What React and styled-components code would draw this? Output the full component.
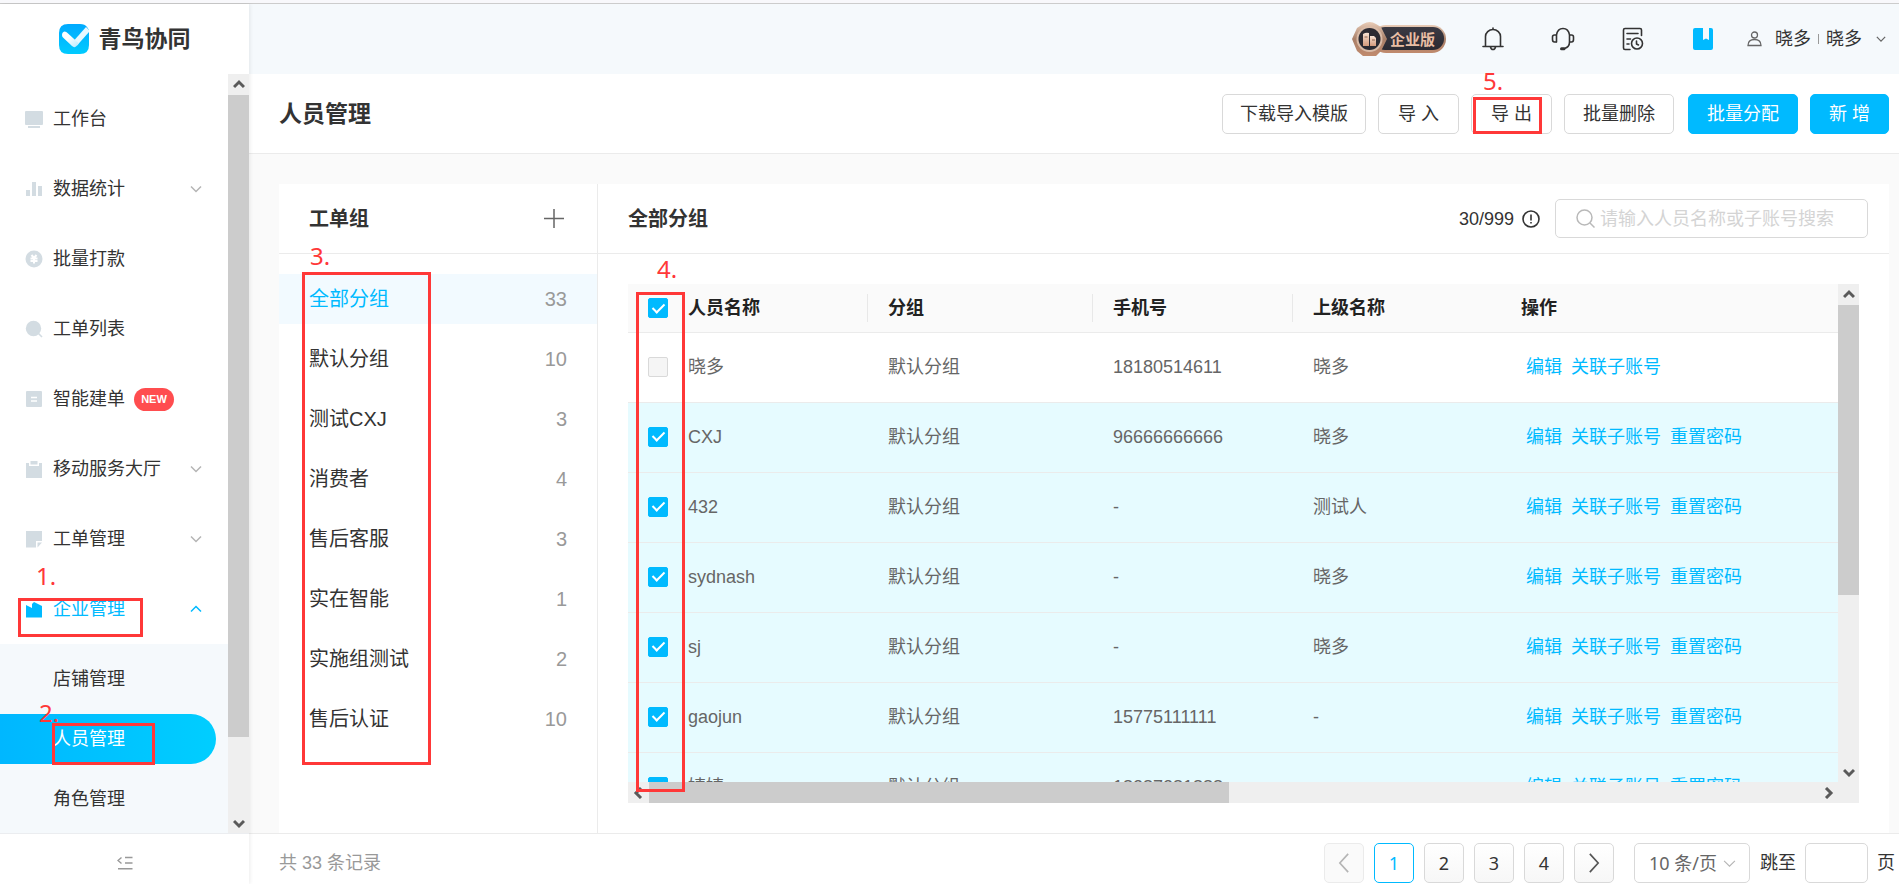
import React, { useState } from 'react'
import styled, { createGlobalStyle, css } from 'styled-components'

const GlobalStyle = createGlobalStyle`
  *, *::before, *::after {
    box-sizing: border-box;
  }
  body {
    margin: 0;
    color: #333;
    background: #fafafa;
    font-family: "Liberation Sans", "Noto Sans CJK SC", sans-serif;
    font-size: 18px;
    line-height: 28px;
  }
  button, input, select {
    font: inherit;
    color: inherit;
  }
  a {
    color: inherit;
    text-decoration: none;
  }
  ul {
    margin: 0;
    padding: 0;
    list-style: none;
  }
  svg {
    display: block;
    flex: none;
  }
`

const Page = styled.div`
  display: flex;
  flex-direction: column;
  height: 100vh;
  overflow: hidden;
  border-top: 3px solid #f8f8fb;
`

const Shell = styled.div`
  flex: 1;
  min-height: 0;
  display: flex;
  border-top: 1px solid #ccc;
`

/* ---------- annotations ---------- */

const MarkBox = styled.div`
  position: absolute;
  z-index: 3;
  top: ${p => p.$top}px;
  left: ${p => p.$left}px;
  width: ${p => p.$width}px;
  height: ${p => p.$height}px;
  border: 3px solid #ff3838;
  pointer-events: none;
`

const MarkLabel = styled.span`
  position: absolute;
  z-index: 3;
  top: ${p => p.$top}px;
  left: ${p => p.$left}px;
  color: #ff3838;
  font: 24px/28px "Noto Sans", sans-serif;
  pointer-events: none;
`

/* ---------- scrollbars ---------- */

const Track = styled.div`
  display: flex;
  flex-direction: ${p => (p.$horizontal ? 'row' : 'column')};
  ${p => (p.$horizontal ? 'height' : 'width')}: 21px;
  flex: none;
  background: #efefef;
`

const TrackArrow = styled.span`
  width: 21px;
  height: 21px;
  display: grid;
  place-items: center;
`

const TrackBody = styled.div`
  flex: 1;
  display: flex;
  flex-direction: inherit;
`

const Thumb = styled.div`
  flex: 0 0 ${p => p.$size};
  background: #ccc;
`

const VerticalBar = styled.div`
  display: flex;
  padding-bottom: 21px;
  background: #efefef;
`

const arrows = {
  up: 'M1 8 L6 3 L11 8',
  down: 'M1 4 L6 9 L11 4',
  left: 'M8 1 L3 6 L8 11',
  right: 'M4 1 L9 6 L4 11'
}

const Arrow = ({ dir }) => (
  <TrackArrow>
    <svg width="12" height="12" viewBox="0 0 12 12" fill="none" stroke="#5a5a5a" strokeWidth="3">
      <path d={arrows[dir]} />
    </svg>
  </TrackArrow>
)

const Scrollbar = ({ horizontal, size }) => (
  <Track $horizontal={horizontal} aria-hidden="true">
    <Arrow dir={horizontal ? 'left' : 'up'} />
    <TrackBody>
      <Thumb $size={size} />
    </TrackBody>
    <Arrow dir={horizontal ? 'right' : 'down'} />
  </Track>
)

/* ---------- sidebar ---------- */

const Sidebar = styled.aside`
  position: relative;
  z-index: 2;
  flex: 0 0 249px;
  display: flex;
  flex-direction: column;
  background: #fff;
  box-shadow: 1px 0 4px rgba(0, 0, 0, .08);
`

const Brand = styled.div`
  height: 70px;
  flex: none;
  display: flex;
  align-items: center;
  justify-content: center;
  gap: 10px;
  font-size: 23px;
  font-weight: 700;
`

const NavScroll = styled.div`
  flex: 1;
  min-height: 0;
  display: flex;
`

const Nav = styled.nav`
  flex: 1;
  padding-top: 10px;
  overflow: hidden;
`

const NavItem = styled.li`
  position: relative;
`

const NavLink = styled.a`
  display: flex;
  align-items: center;
  height: 70px;
  padding: 0 26px 0 25px;
  color: ${p => (p.$open ? '#00baff' : '#333')};
  > svg:last-child:not(:first-child) {
    margin-left: auto;
  }
`

const NavText = styled.span`
  margin-left: 10px;
`

const NewTag = styled.span`
  margin-left: 9px;
  width: 40px;
  height: 23px;
  border-radius: 12px;
  background: #ff4d4f;
  color: #fff;
  font-size: 11px;
  font-weight: 700;
  line-height: 23px;
  text-align: center;
`

const SubMenu = styled.ul`
  display: flex;
  flex-direction: column;
  gap: 10px;
  padding: 10px 12px 20px 0;
  background: #f5f9fc;
`

const SubLink = styled.a`
  display: block;
  height: 50px;
  padding-left: 53px;
  line-height: 50px;
  ${p => p.$active && css`
    color: #fff;
    border-radius: 0 25px 25px 0;
    background: linear-gradient(90deg, #00b7ff, #00ceff);
  `}
`

const CollapseBar = styled.button`
  height: 51px;
  flex: none;
  display: grid;
  place-items: center;
  padding: 8px 0 0;
  border: 0;
  border-top: 1px solid #ebedf0;
  background: #fff;
  cursor: pointer;
`

/* ---------- main column ---------- */

const Main = styled.div`
  flex: 1;
  min-width: 0;
  display: flex;
  flex-direction: column;
`

const TopBar = styled.header`
  height: 70px;
  flex: none;
  display: flex;
  align-items: center;
  justify-content: flex-end;
  padding-right: 13px;
  background: #f5f9fc;
`

const Tools = styled.div`
  display: flex;
  align-items: center;
  gap: 44px;
  margin: 0 31px 0 34px;
`

const IconButton = styled.button`
  display: grid;
  place-items: center;
  min-width: 26px;
  height: 28px;
  padding: 0;
  border: 0;
  background: none;
  cursor: pointer;
`

const Account = styled.button`
  display: flex;
  align-items: center;
  gap: 7px;
  padding: 0;
  border: 0;
  background: none;
  cursor: pointer;
  svg:first-child {
    margin-right: 6px;
  }
  svg:last-child {
    margin-left: 7px;
  }
`

const Divider = styled.i`
  width: 1px;
  height: 10px;
  background: #999;
`

const TitleBar = styled.div`
  height: 80px;
  flex: none;
  display: flex;
  align-items: center;
  gap: 14px;
  padding: 0 10px 0 30px;
  border-bottom: 1px solid #ebebeb;
  background: #fff;
`

const Title = styled.h1`
  margin: 0 auto 0 0;
  font-size: 23px;
  line-height: 32px;
`

const Actions = styled.div`
  display: flex;
  gap: 12px;
`

const ActionSlot = styled.div`
  position: relative;
`

const Button = styled.button`
  height: 40px;
  padding: 0 ${p => p.$pad || 18}px;
  border: 1px solid ${p => (p.$primary ? '#00baff' : '#d9d9d9')};
  border-radius: 5px;
  background: ${p => (p.$primary ? '#00baff' : '#fff')};
  color: ${p => (p.$primary ? '#fff' : '#333')};
  cursor: pointer;
`

const Content = styled.div`
  flex: 1;
  min-height: 0;
  display: flex;
  margin: 30px 10px 0 30px;
  background: #fff;
`

const Groups = styled.section`
  position: relative;
  flex: 0 0 319px;
  border-right: 1px solid #ebebeb;
`

const PanelHead = styled.div`
  height: 70px;
  flex: none;
  display: flex;
  align-items: center;
  padding: 0 30px;
  border-bottom: 1px solid #ebebeb;
`

const PanelTitle = styled.h2`
  margin: 0 auto 0 0;
  font-size: 20px;
  line-height: 28px;
`

const GroupList = styled.ul`
  display: flex;
  flex-direction: column;
  gap: 10px;
  margin-top: 20px;
`

const GroupButton = styled.button`
  display: flex;
  align-items: center;
  justify-content: space-between;
  width: 100%;
  height: 50px;
  padding: 0 30px;
  border: 0;
  background: ${p => (p.$active ? '#f2faff' : 'none')};
  color: ${p => (p.$active ? '#00baff' : '#333')};
  font-size: 20px;
  cursor: pointer;
`

const Count = styled.span`
  color: #999;
`

const Members = styled.section`
  flex: 1;
  min-width: 0;
  display: flex;
  flex-direction: column;
`

const Quota = styled.span`
  display: flex;
  align-items: center;
  gap: 8px;
  margin-right: 15px;
`

const SearchBox = styled.label`
  display: flex;
  align-items: center;
  gap: 5px;
  width: 313px;
  height: 39px;
  margin-right: -9px;
  padding: 0 10px 0 20px;
  border: 1px solid #d9d9d9;
  border-radius: 5px;
  input {
    flex: 1;
    min-width: 0;
    padding: 0;
    border: 0;
    outline: none;
    background: none;
  }
  input::placeholder {
    color: #d4d4d4;
  }
`

const TableArea = styled.div`
  position: relative;
  flex: 1;
  min-height: 0;
  display: flex;
  margin: 30px;
`

const TableColumn = styled.div`
  flex: 1;
  min-width: 0;
  display: flex;
  flex-direction: column;
`

const TableClip = styled.div`
  flex: 1;
  min-height: 0;
  overflow: hidden;
`

const Table = styled.table`
  width: 200%;
  table-layout: fixed;
  border-collapse: separate;
  border-spacing: 0;
  color: #666;
  th, td {
    padding: 0 0 0 20px;
    border-bottom: 1px solid #ebebeb;
    text-align: left;
  }
  td {
    height: 70px;
    padding-bottom: 2px;
  }
  th:nth-child(2), td:nth-child(2) {
    padding-left: 0;
  }
`

const Th = styled.th`
  height: 49px;
  background: #fafafa;
  color: #222;
  font-weight: 700;
  span {
    display: block;
    ${p => p.$split && 'border-right: 1px solid #e8e8e8;'}
  }
`

const Row = styled.tr`
  background: ${p => (p.$checked ? '#e6fbff' : '#fff')};
`

const Check = styled.input`
  appearance: none;
  display: block;
  width: 20px;
  height: 20px;
  margin: 0;
  border: 1px solid #d9d9d9;
  border-radius: 2px;
  background: #fff;
  &:disabled {
    background: #f5f5f5;
  }
  &:checked {
    display: grid;
    place-items: center;
    border-color: #00baff;
    background: #00baff;
  }
  &:checked::after {
    content: '';
    width: 7px;
    height: 12px;
    margin-bottom: 3px;
    border: solid #fff;
    border-width: 0 2px 2px 0;
    transform: rotate(45deg);
  }
`

const Links = styled.span`
  display: flex;
  gap: 9px;
  padding-left: 5px;
  color: #00baff;
`

const Footer = styled.footer`
  height: 51px;
  flex: none;
  display: flex;
  align-items: center;
  gap: 10px;
  padding: 8px 4px 0 30px;
  border-top: 1px solid #ebebeb;
  background: #fff;
`

const Total = styled.span`
  margin-right: auto;
  color: #999;
`

const PageButton = styled.button`
  width: 40px;
  height: 40px;
  display: grid;
  place-items: center;
  padding: 0;
  border: 1px solid ${p => (p.$current ? '#00baff' : '#d9d9d9')};
  border-radius: 5px;
  background: ${p => (p.$current ? '#fff' : 'linear-gradient(#fff, #f7f7f7)')};
  color: ${p => (p.$current ? '#00baff' : '#333')};
  font-family: "Noto Sans", sans-serif;
  cursor: pointer;
  &:disabled {
    border-color: #ebebeb;
    background: #fafafa;
  }
`

const PageSize = styled.label`
  display: grid;
  align-items: center;
  width: 116px;
  height: 40px;
  margin-left: 10px;
  border: 1px solid #d9d9d9;
  border-radius: 5px;
  color: #666;
  select, svg {
    grid-area: 1 / 1;
  }
  select {
    appearance: none;
    height: 38px;
    padding: 0 0 0 14px;
    border: 0;
    background: none;
    font-family: "Noto Sans", "Noto Sans CJK SC", sans-serif;
  }
  svg {
    justify-self: end;
    margin-right: 13px;
    pointer-events: none;
  }
`

const Jump = styled.label`
  display: flex;
  align-items: center;
  gap: 9px;
  input {
    width: 63px;
    height: 40px;
    border: 1px solid #d9d9d9;
    border-radius: 5px;
  }
`

/* ---------- icons ---------- */

const Chevron = ({ up, left, right, size = 12, color = '#b5b5b5', width = 1.5 }) => {
  let d = 'M1 3.5 L6 8.5 L11 3.5'
  if (up) d = 'M1 8.5 L6 3.5 L11 8.5'
  if (left) d = 'M8.5 .5 L3.5 6 L8.5 11.5'
  if (right) d = 'M3.5 .5 L8.5 6 L3.5 11.5'
  return (
    <svg width={size} height={size} viewBox="0 0 12 12" fill="none" stroke={color} strokeWidth={width}>
      <path d={d} />
    </svg>
  )
}

const navShapes = {
  desk: <><rect x="0" y="1" width="18" height="14" rx="1" /><rect x="3" y="16" width="12" height="2" /></>,
  chart: <><rect x="1" y="10" width="4" height="6" /><rect x="7" y="2" width="4" height="14" /><rect x="13" y="6" width="4" height="10" /></>,
  money: <><circle cx="9" cy="9" r="8.5" /><path d="M6.5 5 L9 8 L11.500 5 M5.5 8.5 H12.5 M5.5 11 H12.5 M9 8 V13.500" fill="none" stroke="#fff" strokeWidth="2" /></>,
  search: <><circle cx="8.5" cy="8.5" r="7.7" /><path d="M13 13 L17 17" stroke="#d3dce2" strokeWidth="1.6" /></>,
  doc: <><rect x="1" y="1" width="16" height="16" rx="1" /><path d="M6 7.5 H12 M6 11 H12" stroke="#fff" strokeWidth="1.5" /></>,
  board: <><path d="M1 3 H4 V6 H14 V3 H17 V18 H1 Z" /><rect x="5.5" y="1" width="7" height="3.5" /></>,
  note: <><path d="M1 1 H17 V11 H11 V17.500 H1 Z" /><path d="M12.500 12.500 H17 L12.500 17.500 Z" /></>,
  company: <path d="M1 5 L7 8 V4 L9 2 L17 6 V17.500 H1 Z" />
}

const NavIcon = ({ name, active }) => (
  <svg width="18" height="18" viewBox="0 0 18 18" fill={active ? '#00baff' : '#d3dce2'}>
    {navShapes[name]}
  </svg>
)

const Logo = () => (
  <svg width="30" height="30" viewBox="0 0 30 30">
    <defs>
      <linearGradient id="logoBg" x1="0" y1="0" x2="0" y2="1">
        <stop offset="0" stopColor="#00aaff" />
        <stop offset="1" stopColor="#00cbff" />
      </linearGradient>
      <linearGradient id="logoFold" x1="0" y1="0" x2="1" y2="1">
        <stop offset=".4" stopColor="#fff" />
        <stop offset="1" stopColor="#b5eaff" />
      </linearGradient>
    </defs>
    <path d="M9 0 H21 Q26 0 28 3 L30 6 V21 Q30 30 21 30 H9 Q0 30 0 21 V9 Q0 0 9 0 Z" fill="url(#logoBg)" />
    <path d="M15.500 16 L27 3 L30 6 V8 L18 21.500 Z" fill="#e6f8ff" />
    <path d="M3 11 Q3 8 5.500 7.500 Q7.500 7.500 8.500 9 L20 19.500 L17 22.500 Q15 24 13 22 L4 13.500 Q3 12.500 3 11 Z" fill="url(#logoFold)" />
  </svg>
)

const EnterpriseBadge = () => (
  <svg width="94" height="36" viewBox="0 0 94 36" role="img" aria-label="企业版">
    <defs>
      <linearGradient id="rim" x1="0" y1="0" x2="0" y2="1">
        <stop offset="0" stopColor="#e9cdb8" />
        <stop offset=".5" stopColor="#a98069" />
        <stop offset="1" stopColor="#c08a6d" />
      </linearGradient>
      <linearGradient id="plate" x1="0" y1="0" x2="0" y2="1">
        <stop offset="0" stopColor="#3b3a43" />
        <stop offset="1" stopColor="#2b2a32" />
      </linearGradient>
      <linearGradient id="copper" x1="0" y1="0" x2="0" y2="1">
        <stop offset="0" stopColor="#f7e3d5" />
        <stop offset="1" stopColor="#d49a7c" />
      </linearGradient>
    </defs>
    <rect x="20" y="4" width="74" height="28" rx="14" fill="url(#rim)" />
    <rect x="22" y="6" width="70" height="23" rx="11" fill="url(#plate)" />
    <path d="M11 3 Q18 -1 24 3 L29 6 L35 18 L29 30 L24 35 H11 L5 30 L0 18 L5 7 Z" fill="url(#rim)" />
    <circle cx="17.500" cy="18" r="13" fill="#d9bba7" />
    <circle cx="17.500" cy="18" r="11" fill="#2b2a32" />
    <path d="M11 13 Q14 11 17 12 V25 H11 Z" fill="url(#copper)" />
    <path d="M18 15 H22 L24 17 V25 H18 Z" fill="url(#copper)" />
    <path d="M12.500 16 H15.500 M20 19 H23" stroke="#8d6450" />
    <text x="38" y="24" fontSize="15" fontWeight="700" fill="#e9bea4" fontFamily="Noto Sans CJK SC, sans-serif">企业版</text>
  </svg>
)

const line = { fill: 'none', stroke: '#333', strokeWidth: 1.6, strokeLinecap: 'round', strokeLinejoin: 'round' }

const Bell = () => (
  <svg width="22" height="24" viewBox="0 0 22 24" {...line}>
    <path d="M11 1 V2.500 M3.500 19 V9.500 A7.500 7 0 0 1 18.500 9.500 V19 M1 19.500 H21 M8.500 20 Q9 22.500 11 22.500 T13.500 20" />
  </svg>
)

const Headset = () => (
  <svg width="24" height="24" viewBox="0 0 24 24" {...line}>
    <path d="M5.500 15 V8 Q6.500 1.500 12 1.500 T18.500 8 V15 Q18.500 20 13.500 21.500" />
    <path d="M5 8 H3.500 Q1.500 8 1.500 10 V12.500 Q1.500 15 3.500 15 H5 M19 8 H20.500 Q22.500 8 22.500 10 V12.500 Q22.500 15 20.500 15 H19" />
    <path d="M10.500 21.800 H13" strokeWidth="3" />
  </svg>
)

const Records = () => (
  <svg width="22" height="24" viewBox="0 0 22 24" {...line}>
    <path d="M8 22.500 H3 Q1.500 22.500 1.500 21 V3 Q1.500 1.500 3 1.500 H18 Q19.500 1.500 19.500 3 V8.500 M5 6.500 H16 M5 12 H8.500 M5 17 H7" />
    <circle cx="15" cy="16.500" r="5.500" />
    <path d="M14.500 14 V17 L16.500 18" />
  </svg>
)

const Guide = () => (
  <svg width="20" height="22" viewBox="0 0 20 22" fill="#00baff">
    <path d="M2 0 H10 V12 L13 10.500 L16 12 V0 H18 Q20 0 20 2 V20 Q20 22 18 22 H2 Q0 22 0 20 V2 Q0 0 2 0 Z" />
  </svg>
)

const Person = () => (
  <svg width="15" height="16" viewBox="0 0 15 16" fill="none" stroke="#666" strokeWidth="1.3">
    <circle cx="7.500" cy="4" r="3" />
    <path d="M1 14.500 Q1 8.500 7.500 8.500 T14 14.500 Z" />
  </svg>
)

const Plus = () => (
  <svg width="20" height="20" viewBox="0 0 20 20" stroke="#666" strokeWidth="1.5">
    <path d="M10 0 V19 M0 9.500 H20" />
  </svg>
)

const Info = () => (
  <svg width="18" height="18" viewBox="0 0 18 18" fill="none" stroke="#333" strokeWidth="1.6">
    <circle cx="9" cy="9" r="8" />
    <path d="M9 4.500 V10.500 M9 12 V13.500" />
  </svg>
)

const Magnifier = () => (
  <svg width="19" height="19" viewBox="0 0 19 19" fill="none" stroke="#b9b9b9" strokeWidth="1.5">
    <circle cx="8.500" cy="8.500" r="7.500" />
    <path d="M14 14 L18.500 18.500" />
  </svg>
)

const Collapse = () => (
  <svg width="16" height="14" viewBox="0 0 16 14" fill="none" stroke="#999" strokeWidth="1.4">
    <path d="M4.500 1.500 L1 4.500 L4.500 7.500 M8 1.500 H15.500 M8 7 H15.500 M1 12.800 H15.500" />
  </svg>
)

/* ---------- data ---------- */

const navItems = [
  { icon: 'desk', text: '工作台' },
  { icon: 'chart', text: '数据统计', expandable: true },
  { icon: 'money', text: '批量打款' },
  { icon: 'search', text: '工单列表' },
  { icon: 'doc', text: '智能建单', isNew: true },
  { icon: 'board', text: '移动服务大厅', expandable: true },
  { icon: 'note', text: '工单管理', expandable: true }
]

const groups = [
  ['全部分组', 33],
  ['默认分组', 10],
  ['测试CXJ', 3],
  ['消费者', 4],
  ['售后客服', 3],
  ['实在智能', 1],
  ['实施组测试', 2],
  ['售后认证', 10]
]

const members = [
  { name: '晓多', phone: '18180514611', parent: '晓多', owner: true },
  { name: 'CXJ', phone: '96666666666', parent: '晓多' },
  { name: '432', phone: '-', parent: '测试人' },
  { name: 'sydnash', phone: '-', parent: '晓多' },
  { name: 'sj', phone: '-', parent: '晓多' },
  { name: 'gaojun', phone: '15775111111', parent: '-' },
  { name: '婧婧', phone: '18287281888', parent: '-' }
]

const SideNav = () => (
  <Sidebar>
    <Brand><Logo />青鸟协同</Brand>
    <NavScroll>
      <Nav>
        <ul>
          {navItems.map(item => (
            <NavItem key={item.text}>
              <NavLink href="#">
                <NavIcon name={item.icon} />
                <NavText>{item.text}</NavText>
                {item.isNew && <NewTag>NEW</NewTag>}
                {item.expandable && <Chevron />}
              </NavLink>
            </NavItem>
          ))}
          <NavItem>
            <NavLink href="#" $open>
              <NavIcon name="company" active />
              <NavText>企业管理</NavText>
              <Chevron up color="#00baff" />
            </NavLink>
            <MarkLabel $top={-12} $left={36}>1.</MarkLabel>
            <MarkBox $top={24} $left={18} $width={125} $height={39} />
            <SubMenu>
              <li><SubLink href="#">店铺管理</SubLink></li>
              <NavItem>
                <SubLink href="#" $active>人员管理</SubLink>
                <MarkLabel $top={-15} $left={39}>2.</MarkLabel>
                <MarkBox $top={9} $left={52} $width={103} $height={42} />
              </NavItem>
              <li><SubLink href="#">角色管理</SubLink></li>
            </SubMenu>
          </NavItem>
        </ul>
      </Nav>
      <Scrollbar size="89.5%" />
    </NavScroll>
    <CollapseBar aria-label="收起菜单"><Collapse /></CollapseBar>
  </Sidebar>
)

const GroupPanel = () => {
  const [active, setActive] = useState('全部分组')
  return (
    <Groups>
      <PanelHead>
        <PanelTitle>工单组</PanelTitle>
        <IconButton aria-label="新增工单组"><Plus /></IconButton>
      </PanelHead>
      <GroupList>
        {groups.map(([name, count]) => (
          <li key={name}>
            <GroupButton $active={name === active} onClick={() => setActive(name)}>
              {name}
              <Count>{count}</Count>
            </GroupButton>
          </li>
        ))}
      </GroupList>
      <MarkLabel $top={58} $left={31}>3.</MarkLabel>
      <MarkBox $top={88} $left={23} $width={129} $height={493} />
    </Groups>
  )
}

const MemberPanel = () => {
  const [checked, setChecked] = useState(members.filter(m => !m.owner).map(m => m.name))
  const selectable = members.filter(m => !m.owner)
  const allChecked = checked.length === selectable.length

  const toggle = name => {
    setChecked(checked.includes(name) ? checked.filter(n => n !== name) : [...checked, name])
  }
  const toggleAll = () => setChecked(allChecked ? [] : selectable.map(m => m.name))

  return (
    <Members>
      <PanelHead>
        <PanelTitle>全部分组</PanelTitle>
        <Quota>30/999 <Info /></Quota>
        <SearchBox>
          <Magnifier />
          <input type="text" aria-label="搜索人员" placeholder="请输入人员名称或子账号搜索" />
        </SearchBox>
      </PanelHead>
      <TableArea>
        <TableColumn>
          <TableClip>
            <Table>
              <colgroup>
                <col width="60" />
                <col width="180" />
                <col width="225" />
                <col width="200" />
                <col width="208" />
                <col />
              </colgroup>
              <thead>
                <tr>
                  <Th><Check type="checkbox" aria-label="全选" checked={allChecked} onChange={toggleAll} /></Th>
                  <Th $split><span>人员名称</span></Th>
                  <Th $split><span>分组</span></Th>
                  <Th $split><span>手机号</span></Th>
                  <Th><span>上级名称</span></Th>
                  <Th><span>操作</span></Th>
                </tr>
              </thead>
              <tbody>
                {members.map(m => (
                  <Row key={m.name} $checked={checked.includes(m.name)}>
                    <td>
                      <Check
                        type="checkbox"
                        aria-label={m.name}
                        disabled={m.owner}
                        checked={checked.includes(m.name)}
                        onChange={() => toggle(m.name)}
                      />
                    </td>
                    <td>{m.name}</td>
                    <td>默认分组</td>
                    <td>{m.phone}</td>
                    <td>{m.parent}</td>
                    <td>
                      <Links>
                        <a href="#">编辑</a>
                        <a href="#">关联子账号</a>
                        {!m.owner && <a href="#">重置密码</a>}
                      </Links>
                    </td>
                  </Row>
                ))}
              </tbody>
            </Table>
          </TableClip>
          <Scrollbar horizontal size="49.7%" />
        </TableColumn>
        <VerticalBar>
          <Scrollbar size="63.5%" />
        </VerticalBar>
        <MarkLabel $top={-29} $left={29}>4.</MarkLabel>
        <MarkBox $top={8} $left={8} $width={49} $height={500} />
      </TableArea>
    </Members>
  )
}

const App = () => (
  <Page>
    <GlobalStyle />
    <Shell>
      <SideNav />
      <Main>
        <TopBar>
          <EnterpriseBadge />
          <Tools>
            <IconButton aria-label="通知"><Bell /></IconButton>
            <IconButton aria-label="客服"><Headset /></IconButton>
            <IconButton aria-label="记录"><Records /></IconButton>
            <IconButton aria-label="指南"><Guide /></IconButton>
          </Tools>
          <Account>
            <Person />
            <span>晓多</span>
            <Divider />
            <span>晓多</span>
            <Chevron size={10} color="#666" />
          </Account>
        </TopBar>
        <TitleBar>
          <Title>人员管理</Title>
          <Actions>
            <Button $pad={17}>下载导入模版</Button>
            <Button $pad={19}>导 入</Button>
            <ActionSlot>
              <Button $pad={19}>导 出</Button>
              <MarkLabel $top={-27} $left={12}>5.</MarkLabel>
              <MarkBox $top={3} $left={2} $width={69} $height={37} />
            </ActionSlot>
            <Button>批量删除</Button>
          </Actions>
          <Actions>
            <Button $primary>批量分配</Button>
            <Button $primary>新 增</Button>
          </Actions>
        </TitleBar>
        <Content>
          <GroupPanel />
          <MemberPanel />
        </Content>
        <Footer>
          <Total>共 33 条记录</Total>
          <PageButton disabled aria-label="上一页"><Chevron left size={20} width={1} /></PageButton>
          <PageButton $current>1</PageButton>
          <PageButton>2</PageButton>
          <PageButton>3</PageButton>
          <PageButton>4</PageButton>
          <PageButton aria-label="下一页"><Chevron right size={20} color="#555" width={1} /></PageButton>
          <PageSize>
            <select aria-label="每页条数" defaultValue="10">
              <option value="10">10 条/页</option>
              <option value="20">20 条/页</option>
            </select>
            <Chevron size={13} width={1} />
          </PageSize>
          <Jump>跳至 <input type="text" /> 页</Jump>
        </Footer>
      </Main>
    </Shell>
  </Page>
)

export default App
